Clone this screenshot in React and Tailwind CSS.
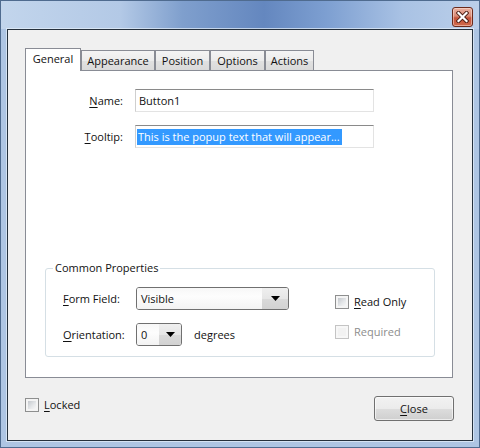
import React from 'react';

const tabs = [
  { label: 'General', w: 'w-[56px]', active: true },
  { label: 'Appearance', w: 'w-[74px]' },
  { label: 'Position', w: 'w-[55px]' },
  { label: 'Options', w: 'w-[55px]' },
  { label: 'Actions', w: 'w-[49px]' },
];

function Key({ children }) {
  return <span className="underline underline-offset-[2px] decoration-1">{children}</span>;
}

function CheckBox({ disabled }) {
  return (
    <span className={`block w-[14px] h-[14px] shrink-0 border p-[2px] ${disabled ? 'border-[#c4c4c4] bg-[#f7f7f7]' : 'border-[#8e8f8f] bg-[#f4f4f4]'}`}>
      <span className={`block w-full h-full ${disabled ? 'bg-[#f2f2f2]' : 'bg-[linear-gradient(135deg,#c4c8cd,#e6e8ea_60%,#f6f6f6)]'}`} />
    </span>
  );
}

function Combo({ value, width, btn }) {
  return (
    <div className={`${width} h-[23px] flex border border-[#707070] rounded-[3px] overflow-hidden`}>
      <div className="flex-1 flex items-center pl-[4px] bg-[linear-gradient(#f7f7f7,#fdfdfd_40%,#f3f3f3)]">{value}</div>
      <div className={`${btn} flex items-center justify-center bg-[linear-gradient(#efefef,#e6e6e6_50%,#dadada_51%,#d2d2d2)]`}>
        <svg width="9" height="5" viewBox="0 0 9 5"><path d="M0 0h9L4.5 5z" fill="#000" /></svg>
      </div>
    </div>
  );
}

export default function App() {
  return (
    <div className="w-[480px] h-[448px] flex flex-col border border-[#4f6b8f] bg-[#aec5e3] font-['Open_Sans',sans-serif] text-[11px] text-[#111] leading-none">
      {/* title bar */}
      <div className="h-[28px] shrink-0 flex justify-end items-start pt-[6px] pr-[6px] bg-[linear-gradient(90deg,#c2d5ec_0%,#b3c9e6_25%,#7f9fcd_38%,#6487bf_55%,#7d9fd1_68%,#a9c2e4_84%,#bbcfe9_100%)]">
        <div className="w-[21px] h-[20px] rounded-[3px] border border-[#6b2a1c] flex items-center justify-center bg-[linear-gradient(#eab2a2,#d98a75_45%,#c5533a_55%,#cf6a4c)] shadow-[inset_0_0_0_1px_rgba(255,230,220,0.5)]">
          <svg width="13" height="12" viewBox="0 0 13 12">
            <path d="M2.5 2 L10.5 10 M10.5 2 L2.5 10" stroke="#4a1d14" strokeWidth="4" strokeLinecap="square" />
            <path d="M2.5 2 L10.5 10 M10.5 2 L2.5 10" stroke="#fff" strokeWidth="2.2" strokeLinecap="square" />
          </svg>
        </div>
      </div>

      {/* client area */}
      <div className="flex-1 mx-[6px] mb-[6px] border border-[#25303c] bg-[#f0f0f0] shadow-[0_0_0_1px_rgba(230,240,250,0.7)] flex flex-col pt-[18px] pl-[17px] pr-[18px]">
        <div className="flex items-end h-[22px]">
          {tabs.map((t) =>
            t.active ? (
              <div key={t.label} className={`${t.w} h-[23px] -mb-px relative z-10 bg-white border border-b-0 border-[#898c95] flex items-start justify-center pt-[4px]`}>
                {t.label}
              </div>
            ) : (
              <div key={t.label} className={`${t.w} h-[20px] border border-b-0 border-[#898c95] flex items-center justify-center bg-[linear-gradient(#f4f4f4,#ececec_50%,#e1e1e1_51%,#dadada)]`}>
                {t.label}
              </div>
            )
          )}
        </div>

        <div className="w-[428px] h-[308px] border border-[#898c95] bg-white flex flex-col pt-[18px]">
          <div className="flex items-center h-[23px]">
            <div className="w-[97px] text-right"><Key>N</Key>ame:</div>
            <div className="ml-[12px] w-[239px] h-[23px] border border-[#e3e3e3] border-t-[#8a8a8a] border-l-[#cfcfcf] flex items-center pl-[3px]">Button1</div>
          </div>
          <div className="flex items-center h-[23px] mt-[13px]">
            <div className="w-[97px] text-right"><Key>T</Key>ooltip:</div>
            <div className="ml-[12px] w-[239px] h-[23px] border border-[#e3e3e3] border-t-[#8a8a8a] border-l-[#cfcfcf] flex items-center pl-[1px]">
              <span className="bg-[#3399ff] text-white h-[16px] flex items-center pl-[1px] pr-[2px]">This is the popup text that will appear...</span>
            </div>
          </div>

          <div className="relative mt-[120px] ml-[19px] w-[390px] h-[89px] border border-[#d5dfe5] rounded-[3px] flex">
            <span className="absolute -top-[7px] left-[7px] bg-white px-[2px]">Common Properties</span>
            <div className="pl-[17px] pt-[18px] flex flex-col gap-[13px]">
              <div className="flex items-center">
                <div className="w-[73px]"><Key>F</Key>orm Field:</div>
                <Combo value="Visible" width="w-[153px]" btn="w-[26px]" />
              </div>
              <div className="flex items-center">
                <div className="w-[73px]"><Key>O</Key>rientation:</div>
                <Combo value="0" width="w-[46px]" btn="w-[22px]" />
                <span className="ml-[12px]">degrees</span>
              </div>
            </div>
            <div className="ml-[46px] pt-[25px] flex flex-col gap-[15px]">
              <div className="flex items-center h-[15px] gap-[5px]">
                <CheckBox />
                <span><Key>R</Key>ead Only</span>
              </div>
              <div className="flex items-center h-[15px] gap-[5px] text-[#8d8d8d]">
                <CheckBox disabled />
                <span>Required</span>
              </div>
            </div>
          </div>
        </div>

        <div className="mt-[18px] flex items-start justify-between">
          <div className="flex items-center h-[15px] mt-[1px] gap-[5px]">
            <CheckBox />
            <span><Key>L</Key>ocked</span>
          </div>
          <button className="w-[80px] h-[25px] border border-[#707070] rounded-[3px] bg-[linear-gradient(#f2f2f2,#ebebeb_50%,#dddddd_51%,#cfcfcf)] shadow-[inset_0_0_0_1px_rgba(255,255,255,0.6)] flex items-center justify-center">
            <span><Key>C</Key>lose</span>
          </button>
        </div>
      </div>
    </div>
  );
}
